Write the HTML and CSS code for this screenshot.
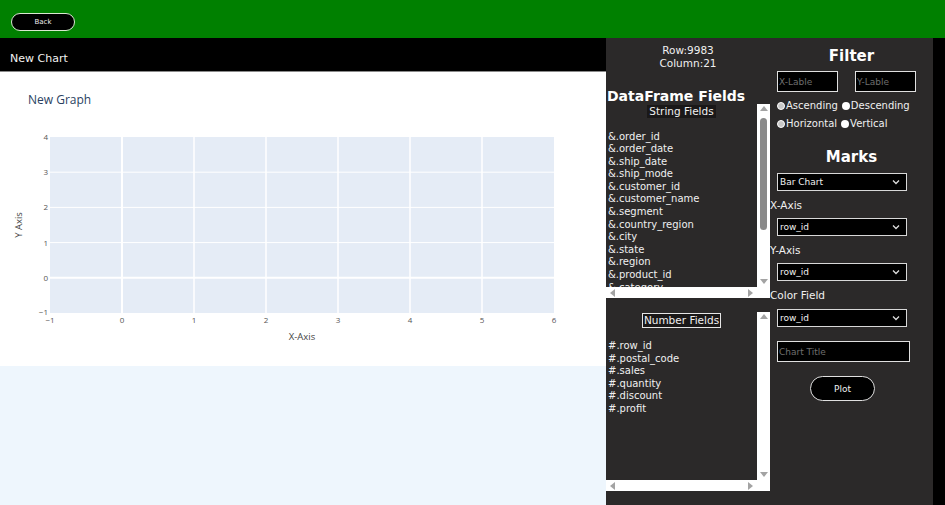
FILE: index.html
```html
<!DOCTYPE html>
<html>
<head>
<meta charset="utf-8">
<link rel="stylesheet" href="styles.css">
</head>
<body>
<div class="topbar"><button class="back">Back</button></div>
<div class="main">
  <div class="left">
    <div class="header">New Chart</div>
    <div class="chart">
      <svg width="606" height="294" viewBox="0 0 606 294">
        <text x="28" y="32" class="title">New Graph</text>
        <rect x="50" y="65" width="504" height="176" fill="#e5ecf6"/>
        <g stroke="#ffffff" stroke-width="1">
          <line x1="50" y1="100.2" x2="554" y2="100.2"/>
          <line x1="50" y1="135.4" x2="554" y2="135.4"/>
          <line x1="50" y1="170.6" x2="554" y2="170.6"/>
        </g>
        <line x1="50" y1="205.8" x2="554" y2="205.8" stroke="#fff" stroke-width="2"/>
        <g stroke="#ffffff" stroke-width="1.5">
          <line x1="194" y1="65" x2="194" y2="241"/>
          <line x1="266" y1="65" x2="266" y2="241"/>
          <line x1="338" y1="65" x2="338" y2="241"/>
          <line x1="410" y1="65" x2="410" y2="241"/>
          <line x1="482" y1="65" x2="482" y2="241"/>
        </g>
        <line x1="122" y1="65" x2="122" y2="241" stroke="#fff" stroke-width="2"/>
        <g class="tick" text-anchor="end">
          <text x="48" y="68">4</text>
          <text x="48" y="103">3</text>
          <text x="48" y="138">2</text>
          <text x="48" y="174">1</text>
          <text x="48" y="209">0</text>
          <text x="48" y="243">−1</text>
        </g>
        <g class="tick" text-anchor="middle">
          <text x="50" y="251">−1</text>
          <text x="122" y="251">0</text>
          <text x="194" y="251">1</text>
          <text x="266" y="251">2</text>
          <text x="338" y="251">3</text>
          <text x="410" y="251">4</text>
          <text x="482" y="251">5</text>
          <text x="554" y="251">6</text>
        </g>
        <text x="302" y="268" class="axis" text-anchor="middle">X-Axis</text>
        <text x="0" y="0" class="axis" text-anchor="middle" transform="translate(22 153) rotate(-90)">Y Axis</text>
      </svg>
    </div>
    <div class="below"></div>
  </div>

  <div class="panel">
    <div class="fields">
      <div class="rowinfo"><div>Row:9983</div><div>Column:21</div></div>
      <div class="df-title">DataFrame Fields</div>

      <div class="listbox lb1">
        <div class="lb-body">
          <div class="lb-content">
            <div class="lb-label"><span class="lbl-str">String Fields</span></div>
            <div class="lb-items">
              <div>&amp;.order_id</div>
              <div>&amp;.order_date</div>
              <div>&amp;.ship_date</div>
              <div>&amp;.ship_mode</div>
              <div>&amp;.customer_id</div>
              <div>&amp;.customer_name</div>
              <div>&amp;.segment</div>
              <div>&amp;.country_region</div>
              <div>&amp;.city</div>
              <div>&amp;.state</div>
              <div>&amp;.region</div>
              <div>&amp;.product_id</div>
              <div>&amp;.category</div>
            </div>
          </div>
          <div class="vscroll">
            <span class="arr up"></span>
            <span class="thumb"></span>
            <span class="arr down"></span>
          </div>
        </div>
        <div class="hscroll">
          <div class="htrack"><span class="arr lft"></span><span class="arr rgt"></span></div>
          <div class="corner"></div>
        </div>
      </div>

      <div class="listbox lb2">
        <div class="lb-body">
          <div class="lb-content">
            <div class="lb-label lbl2"><span class="lbl-num">Number Fields</span></div>
            <div class="lb-items items2">
              <div>#.row_id</div>
              <div>#.postal_code</div>
              <div>#.sales</div>
              <div>#.quantity</div>
              <div>#.discount</div>
              <div>#.profit</div>
            </div>
          </div>
          <div class="vscroll vs2">
            <span class="arr up"></span>
            <span class="arr down"></span>
          </div>
        </div>
        <div class="hscroll">
          <div class="htrack"><span class="arr lft"></span><span class="arr rgt"></span></div>
          <div class="corner"></div>
        </div>
      </div>
    </div>

    <div class="controls">
      <div class="heading h-filter">Filter</div>
      <div class="inputs">
        <input class="txt small" placeholder="X-Lable">
        <input class="txt small" placeholder="Y-Lable">
      </div>
      <div class="radios r1">
        <span class="radio"><span class="dot ring"></span>Ascending</span>
        <span class="radio"><span class="dot full"></span>Descending</span>
      </div>
      <div class="radios">
        <span class="radio"><span class="dot ring"></span>Horizontal</span>
        <span class="radio"><span class="dot full"></span>Vertical</span>
      </div>
      <div class="heading h-marks">Marks</div>
      <div class="select s-first"><span>Bar Chart</span><svg class="chev" width="8" height="6" viewBox="0 0 8 6"><path d="M1 1.5 L4 4.5 L7 1.5" fill="none" stroke="#ddd" stroke-width="1.3"/></svg></div>
      <div class="flabel">X-Axis</div>
      <div class="select"><span>row_id</span><svg class="chev" width="8" height="6" viewBox="0 0 8 6"><path d="M1 1.5 L4 4.5 L7 1.5" fill="none" stroke="#ddd" stroke-width="1.3"/></svg></div>
      <div class="flabel">Y-Axis</div>
      <div class="select"><span>row_id</span><svg class="chev" width="8" height="6" viewBox="0 0 8 6"><path d="M1 1.5 L4 4.5 L7 1.5" fill="none" stroke="#ddd" stroke-width="1.3"/></svg></div>
      <div class="flabel">Color Field</div>
      <div class="select s-color"><span>row_id</span><svg class="chev" width="8" height="6" viewBox="0 0 8 6"><path d="M1 1.5 L4 4.5 L7 1.5" fill="none" stroke="#ddd" stroke-width="1.3"/></svg></div>
      <input class="txt wide" placeholder="Chart Title">
      <button class="plot">Plot</button>
    </div>
  </div>
  <div class="edge"></div>
</div>
</body>
</html>
```

FILE: styles.css
```css
* { box-sizing: border-box; }
html, body { margin: 0; padding: 0; }
body {
  width: 945px;
  height: 505px;
  overflow: hidden;
  font-family: "DejaVu Sans", Verdana, sans-serif;
  background: #000;
}
.topbar {
  height: 38px;
  background: #008000;
  padding: 13px 0 0 11px;
}
.back {
  display: block;
  width: 64px;
  height: 18px;
  padding: 0;
  background: #000;
  color: #eee;
  border: 1.5px solid #d8e8d0;
  border-radius: 10px;
  font-family: "DejaVu Sans", sans-serif;
  font-size: 7px;
}
.main {
  display: flex;
  height: 467px;
}
.left {
  width: 606px;
  display: flex;
  flex-direction: column;
}
.header {
  height: 34px;
  background: #000;
  color: #f2f2f2;
  font-size: 11px;
  line-height: 14px;
  padding: 14px 0 0 10px;
  border-bottom: 1px solid #8a8a8a;
}
.chart {
  height: 294px;
  background: #fff;
}
.chart svg { display: block; }
.title {
  font-family: "Open Sans", sans-serif;
  font-size: 12px;
  fill: #2a3f5f;
}
.tick {
  font-family: "Open Sans", sans-serif;
  font-size: 8px;
  fill: #555;
}
.axis {
  font-family: "Open Sans", sans-serif;
  font-size: 9.5px;
  fill: #444;
}
.below {
  flex: 1;
  background: #eef6fd;
}
.panel {
  width: 327px;
  background: #2b2929;
  display: flex;
  color: #f0f0f0;
}
.fields {
  width: 164px;
  display: flex;
  flex-direction: column;
}
.rowinfo {
  padding-top: 6px;
  text-align: center;
  font-size: 10.5px;
  line-height: 13px;
}
.df-title {
  margin-top: 18px;
  padding-left: 1px;
  font-weight: bold;
  font-size: 14px;
  line-height: 16px;
  color: #fff;
}
.listbox {
  display: flex;
  flex-direction: column;
}
.lb1 { height: 194px; }
.lb2 { height: 180px; margin-top: 13px; }
.lb-body {
  flex: 1;
  display: flex;
  overflow: hidden;
}
.lb-content {
  width: 151px;
  overflow: hidden;
  font-size: 10px;
}
.lb-label {
  text-align: center;
  line-height: 13px;
  padding-top: 1px;
}
.lbl2 { padding-top: 2px; }
.lbl-str {
  display: inline-block;
  background: #1a1818;
  padding: 0 2px;
  font-size: 10.5px;
}
.lbl-num {
  display: inline-block;
  border: 1px solid #e6e6e6;
  background: #1a1818;
  padding: 0 1px;
  font-size: 10.5px;
  line-height: 13px;
}
.lb-items {
  margin-top: 12.5px;
  padding-left: 2px;
  line-height: 12.6px;
  white-space: nowrap;
}
.items2 { margin-top: 12px; }
.vscroll {
  width: 13px;
  background: #fff;
  position: relative;
}
.vs2 { margin-top: 1px; }
.arr {
  position: absolute;
  width: 0;
  height: 0;
}
.arr.up {
  top: 2px; left: 2.5px;
  border-left: 4px solid transparent;
  border-right: 4px solid transparent;
  border-bottom: 5px solid #a3a3a3;
}
.arr.down {
  bottom: 3px; left: 2.5px;
  border-left: 4px solid transparent;
  border-right: 4px solid transparent;
  border-top: 5px solid #a3a3a3;
}
.thumb {
  position: absolute;
  top: 14px;
  left: 3px;
  width: 7px;
  height: 112px;
  background: #8a8a8a;
  border-radius: 4px;
}
.hscroll {
  height: 11px;
  display: flex;
  background: #fff;
}
.htrack {
  width: 151px;
  position: relative;
}
.corner { width: 13px; }
.arr.lft {
  top: 1.5px; left: 4px;
  border-top: 4px solid transparent;
  border-bottom: 4px solid transparent;
  border-right: 5px solid #a3a3a3;
}
.arr.rgt {
  top: 1.5px; right: 4px;
  border-top: 4px solid transparent;
  border-bottom: 4px solid transparent;
  border-left: 5px solid #a3a3a3;
}
.controls {
  width: 163px;
  display: flex;
  flex-direction: column;
}
.heading {
  text-align: center;
  font-weight: bold;
  font-size: 15px;
  line-height: 17px;
  color: #fff;
}
.h-filter { margin-top: 9.5px; }
.h-marks { margin-top: 16px; }
.inputs {
  display: flex;
  gap: 17px;
  margin: 6.5px 0 0 7px;
}
.txt {
  height: 21px;
  background: #000;
  border: 1px solid #e0e0e0;
  color: #fff;
  font-family: "DejaVu Sans", sans-serif;
  font-size: 9px;
  padding: 0 1px;
  outline: none;
}
.txt::placeholder { color: #6e6e6e; }
.small { width: 61px; }
.wide { width: 133px; margin: 14px 0 0 7px; }
.radios {
  display: flex;
  gap: 4px;
  padding-left: 7px;
  font-size: 10px;
  line-height: 18px;
}
.r1 { margin-top: 5px; }
.radio {
  display: flex;
  align-items: center;
}
.dot {
  width: 8px;
  height: 8px;
  border-radius: 50%;
  margin-right: 1px;
}
.dot.ring { background: #c8c8c8; border: 1.5px solid #fff; }
.dot.full { background: #fff; }
.select {
  width: 130px;
  height: 18px;
  margin: 6px 0 0 7px;
  background: #000;
  border: 1px solid #d8d8d8;
  display: flex;
  align-items: center;
  justify-content: space-between;
  padding: 0 6px 0 2px;
  font-size: 9px;
  color: #f0f0f0;
}
.s-first { margin-top: 7px; }
.s-color { margin-top: 7px; }
.chev { display: block; }
.flabel {
  margin-top: 7px;
  font-size: 10.5px;
  line-height: 14px;
  color: #f0f0f0;
}
.plot {
  width: 65px;
  height: 25px;
  margin: 14px 0 0 40px;
  padding: 0;
  background: #000;
  color: #f0f0f0;
  border: 1.5px solid #e0e0e0;
  border-radius: 13px;
  font-family: "DejaVu Sans", sans-serif;
  font-size: 9px;
}
.edge {
  width: 12px;
  background: #000;
}
```
